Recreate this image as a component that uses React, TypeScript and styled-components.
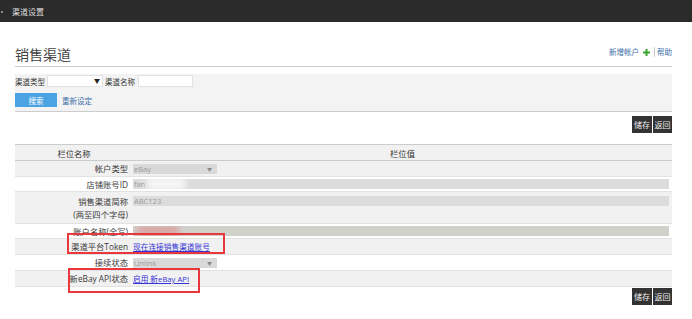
import styled, { createGlobalStyle } from "styled-components";

const GlobalStyle = createGlobalStyle`
  body {
    margin: 0;
    background: #fff;
    font-family: "Open Sans", "Noto Sans CJK SC", sans-serif;
    color: #333;
  }
`;

const Page = styled.div`
  position: relative;
  width: 692px;
  height: 319px;
  overflow: hidden;
`;

const TopBar = styled.div`
  height: 22px;
  background: #2b2b2b;
  color: #ddd;
  font-size: 8px;
  display: flex;
  align-items: center;
  padding-left: 12px;
  position: relative;

  &::before {
    content: "";
    position: absolute;
    left: 1px;
    top: 11px;
    width: 2px;
    height: 2px;
    background: #888;
  }
`;

const Main = styled.div`
  padding: 0 20px 0 15px;
`;

const TitleRow = styled.div`
  margin-top: 25px;
  display: flex;
  justify-content: space-between;
  align-items: flex-end;
  border-bottom: 1px solid #ccc;
  padding-bottom: 3px;
`;

const Title = styled.h1`
  margin: 0;
  font-size: 14px;
  line-height: 16px;
  font-weight: 400;
  color: #444;
`;

const TopLinks = styled.div`
  display: flex;
  align-items: center;
  font-size: 7.5px;
  line-height: 10px;
  color: #3b6ea8;
  margin-bottom: 6px;
`;

const Sep = styled.span`
  width: 1px;
  height: 10px;
  background: #ccc;
  margin: 0 2px 0 4px;
`;

const FilterBox = styled.div`
  margin-top: 7px;
  background: #f3f3f3;
  border-bottom: 1px solid #ccc;
  height: 36px;
  padding-top: 1px;
  display: flex;
  flex-direction: column;
  gap: 6px;
`;

const FilterRow = styled.div`
  display: flex;
  align-items: center;
  font-size: 7.5px;
  color: #333;
  gap: 2px;
`;

const FilterSelect = styled.div`
  width: 54px;
  height: 10px;
  background: #fff;
  border: 1px solid #e2e2e2;
  position: relative;

  &::after {
    content: "▼";
    position: absolute;
    right: 2px;
    top: 0;
    font-size: 6px;
    line-height: 10px;
    color: #222;
  }
`;

const FilterInput = styled.div`
  width: 53px;
  height: 10px;
  background: #fff;
  border: 1px solid #e2e2e2;
  margin-left: 1px;
`;

const SearchButton = styled.div`
  width: 42px;
  height: 14px;
  background: #4ba3e3;
  color: #fff;
  font-size: 7.5px;
  display: flex;
  align-items: center;
  justify-content: center;
`;

const PlainLink = styled.span`
  color: #3b6ea8;
  margin-left: 3px;
`;

const ActionBar = styled.div<{ $top: number }>`
  display: flex;
  justify-content: flex-end;
  gap: 1px;
  margin-top: ${(p) => p.$top}px;
`;

const DarkButton = styled.div<{ $w: number }>`
  width: ${(p) => p.$w}px;
  height: 17px;
  background: #333;
  color: #eee;
  font-size: 8px;
  display: flex;
  align-items: center;
  justify-content: center;
`;

const Table = styled.table`
  margin-top: 11px;
  width: 100%;
  border-collapse: collapse;
  font-size: 8.3px;
  color: #333;
  border-top: 1px solid #ccc;
`;

const Row = styled.tr<{ $gray?: boolean; $h: number }>`
  height: ${(p) => p.$h}px;
  background: ${(p) => (p.$gray ? "#f1f1f1" : "#fff")};
  border-bottom: 1px solid #e2e2e2;
`;

const HeadCell = styled.th<{ $w?: number }>`
  font-weight: 400;
  text-align: center;
  padding: 0;
  width: ${(p) => (p.$w ? `${p.$w}px` : "auto")};
  border-bottom: 1px solid #ccc;
`;

const LabelCell = styled.td`
  text-align: right;
  padding: 0 5px 0 0;
  vertical-align: middle;
  line-height: 13px;
  white-space: nowrap;
  color: #3a3a3a;
`;

const ValueCell = styled.td`
  padding: 0;
  vertical-align: middle;
`;

const Block = styled.div`
  margin-top: -12px;
`;

const DisabledSelect = styled.div`
  width: 83px;
  height: 10px;
  background: #d9d9d9;
  color: #9a9a9a;
  font-size: 7.5px;
  line-height: 10px;
  padding-left: 1px;
  position: relative;

  &::after {
    content: "▼";
    position: absolute;
    right: 5px;
    top: 0;
    font-size: 5px;
    color: #888;
  }
`;

const DisabledInput = styled.div<{ $bg?: string }>`
  width: 535px;
  height: 10px;
  background: ${(p) => p.$bg ?? "#dcdcdc"};
  color: #9a9a9a;
  font-size: 7.5px;
  line-height: 10px;
  padding-left: 1px;
  position: relative;
  overflow: hidden;
`;

const Blur = styled.span<{ $color: string; $left: number; $w: number }>`
  position: absolute;
  left: ${(p) => p.$left}px;
  top: -2px;
  width: ${(p) => p.$w}px;
  height: 14px;
  background: ${(p) => p.$color};
  filter: blur(3px);
`;

const TableLink = styled.a`
  color: #3535d6;
  text-decoration: underline;
  font-size: 7.7px;
`;

const Callout = styled.div<{ $l: number; $t: number; $w: number; $h: number }>`
  position: absolute;
  left: ${(p) => p.$l}px;
  top: ${(p) => p.$t}px;
  width: ${(p) => p.$w}px;
  height: ${(p) => p.$h}px;
  border: 2px solid #e8383d;
  box-sizing: border-box;
`;

function PlusIcon() {
  return (
    <svg width="7" height="7" viewBox="0 0 7 7" style={{ marginLeft: 4 }}>
      <path d="M2.5 0h2v2.5H7v2H4.5V7h-2V4.5H0v-2h2.5z" fill="#3aa52f" />
    </svg>
  );
}

export default function App() {
  return (
    <Page>
      <GlobalStyle />
      <TopBar>渠道设置</TopBar>
      <Main>
        <TitleRow>
          <Title>销售渠道</Title>
          <TopLinks>
            新增帐户
            <PlusIcon />
            <Sep />
            帮助
          </TopLinks>
        </TitleRow>

        <FilterBox>
          <FilterRow>
            渠道类型
            <FilterSelect />
            渠道名称
            <FilterInput />
          </FilterRow>
          <FilterRow>
            <SearchButton>搜索</SearchButton>
            <PlainLink>重新设定</PlainLink>
          </FilterRow>
        </FilterBox>

        <ActionBar $top={4}>
          <DarkButton $w={20}>储存</DarkButton>
          <DarkButton $w={19}>返回</DarkButton>
        </ActionBar>

        <Table>
          <thead>
            <Row $gray $h={16}>
              <HeadCell $w={118}>栏位名称</HeadCell>
              <HeadCell>栏位值</HeadCell>
            </Row>
          </thead>
          <tbody>
            <Row $gray $h={16}>
              <LabelCell>帐户类型</LabelCell>
              <ValueCell>
                <DisabledSelect>eBay</DisabledSelect>
              </ValueCell>
            </Row>
            <Row $h={15}>
              <LabelCell>店铺账号ID</LabelCell>
              <ValueCell>
                <DisabledInput>
                  fan
                  <Blur $color="#f6f6f6" $left={14} $w={38} />
                </DisabledInput>
              </ValueCell>
            </Row>
            <Row $gray $h={32}>
              <LabelCell>
                销售渠道简称
                <br />
                (两至四个字母)
              </LabelCell>
              <ValueCell>
                <Block>
                  <DisabledInput>ABC123</DisabledInput>
                </Block>
              </ValueCell>
            </Row>
            <Row $h={15}>
              <LabelCell>账户名称(全写)</LabelCell>
              <ValueCell>
                <DisabledInput $bg="#d1d1cc">
                  <Blur $color="#d8aaaa" $left={4} $w={42} />
                </DisabledInput>
              </ValueCell>
            </Row>
            <Row $gray $h={16}>
              <LabelCell>渠道平台Token</LabelCell>
              <ValueCell>
                <TableLink>现在连接销售渠道账号</TableLink>
              </ValueCell>
            </Row>
            <Row $h={16}>
              <LabelCell>接续状态</LabelCell>
              <ValueCell>
                <DisabledSelect>Unlink</DisabledSelect>
              </ValueCell>
            </Row>
            <Row $gray $h={16}>
              <LabelCell>新eBay API状态</LabelCell>
              <ValueCell>
                <TableLink>启用 新eBay API</TableLink>
              </ValueCell>
            </Row>
          </tbody>
        </Table>

        <ActionBar $top={1}>
          <DarkButton $w={20}>储存</DarkButton>
          <DarkButton $w={19}>返回</DarkButton>
        </ActionBar>
      </Main>

      <Callout $l={67} $t={233} $w={158} $h={21} />
      <Callout $l={68} $t={268} $w={132} $h={25} />
    </Page>
  );
}
